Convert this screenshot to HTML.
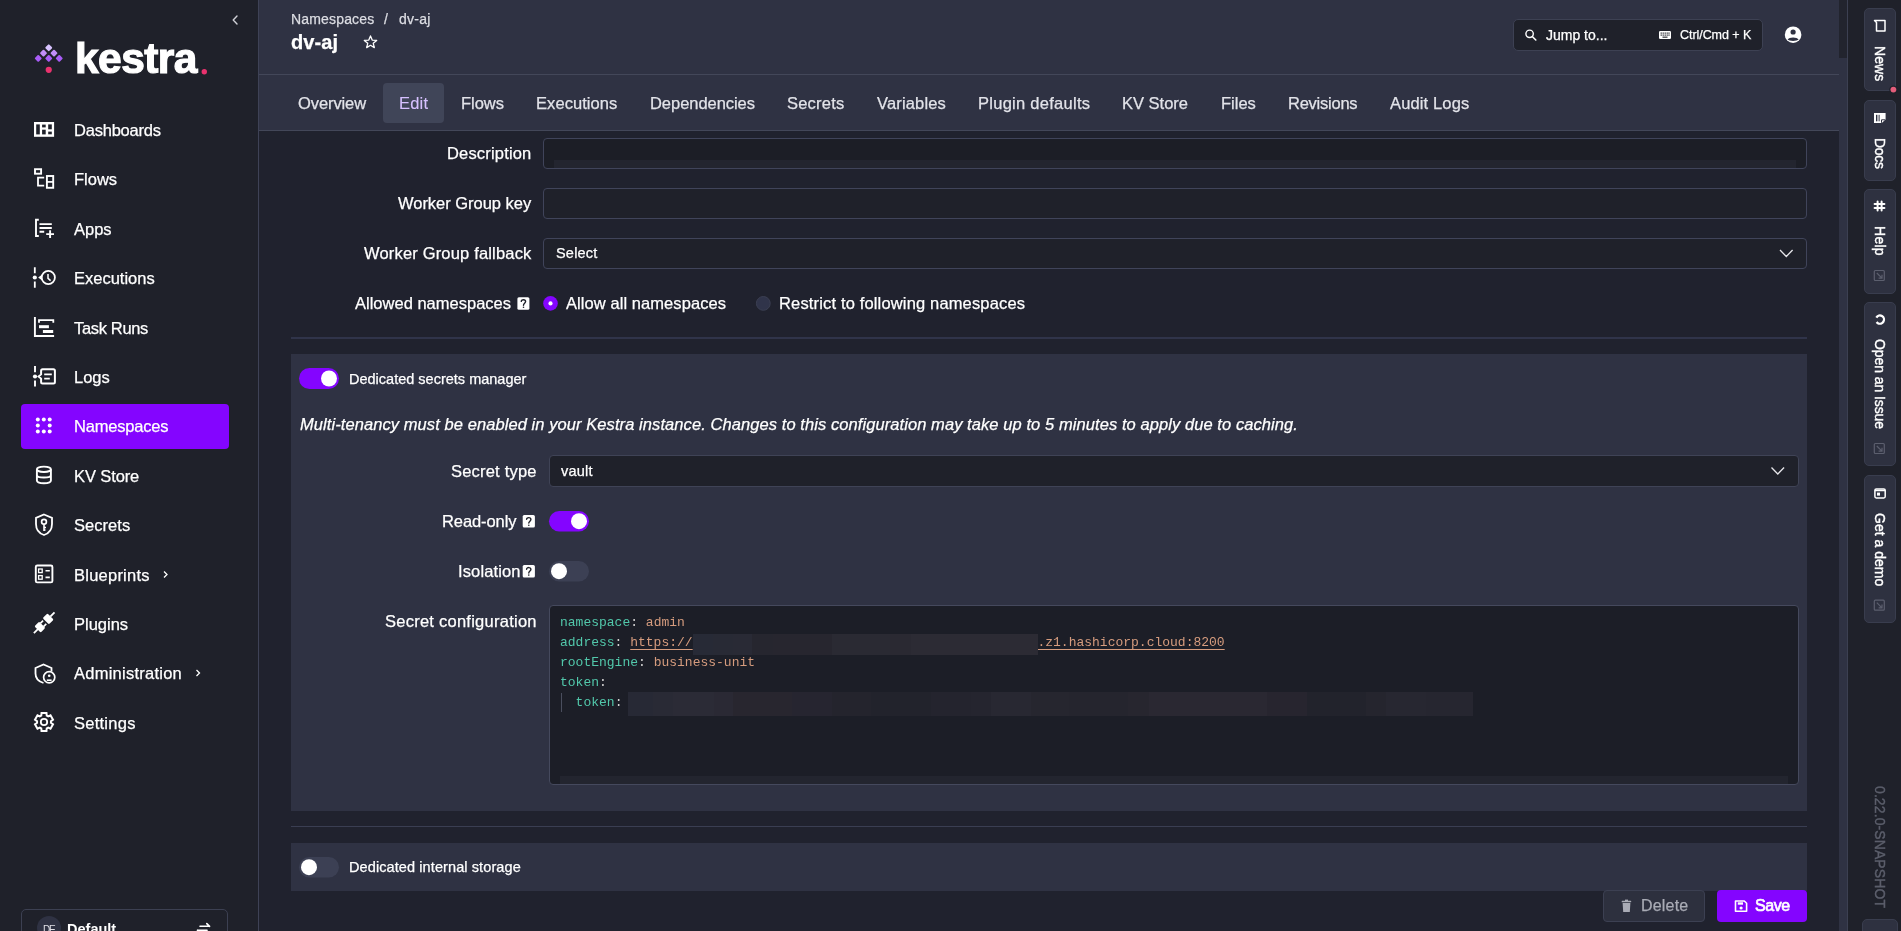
<!DOCTYPE html>
<html><head><meta charset="utf-8">
<style>
*{box-sizing:border-box;margin:0;padding:0}
html,body{width:1901px;height:931px;overflow:hidden;background:#20222e;font-family:"Liberation Sans",sans-serif;color:#fff}
.t{position:absolute;white-space:pre;font-family:"Liberation Sans",sans-serif;will-change:transform;-webkit-text-stroke:0.25px currentColor}
.r{position:absolute}
.code{will-change:transform;position:absolute;font-family:"Liberation Mono",monospace;font-size:13px;line-height:20px;white-space:pre;color:#d4d4d4}
.k{color:#52c8ab}.v{color:#d69c7e}
.u{text-decoration:underline;text-underline-offset:3px;text-decoration-thickness:1px}
</style></head><body>
<!-- sidebar -->
<div class="r" style="left:0;top:0;width:258px;height:931px;background:#1f212a"></div>
<div class="r" style="left:258px;top:0;width:1px;height:931px;background:#3e4256"></div>
<!-- header -->
<div class="r" style="left:259px;top:0;width:1580px;height:131px;background:#2f3243"></div>
<div class="r" style="left:259px;top:74px;width:1580px;height:1px;background:#434759"></div>
<div class="r" style="left:259px;top:130px;width:1580px;height:1px;background:#434759"></div>
<!-- scrollbar track -->
<div class="r" style="left:1839px;top:0;width:8px;height:931px;background:#2f3243"></div>
<div class="r" style="left:1839px;top:0;width:8px;height:58px;background:#22242e"></div>
<div class="r" style="left:1847px;top:0;width:1px;height:931px;background:#3c4052"></div>
<!-- right sidebar -->
<div class="r" style="left:1848px;top:0;width:53px;height:931px;background:#1f212a"></div>

<!-- active nav -->
<div class="r" style="left:21px;top:404px;width:208px;height:45px;background:#8405ff;border-radius:4px"></div>
<!-- edit tab -->
<div class="r" style="left:383px;top:83px;width:61px;height:40px;background:#404558;border-radius:4px"></div>

<!-- search -->
<div class="r" style="left:1513px;top:19px;width:250px;height:32px;background:#1f212a;border:1px solid #3d4153;border-radius:5px"></div>

<!-- form inputs -->
<div class="r" style="left:543px;top:138px;width:1264px;height:31px;background:#1c1e26;border:1px solid #40445a;border-radius:4px"></div>
<div class="r" style="left:554px;top:160px;width:1242px;height:8px;background:#23252f"></div>
<div class="r" style="left:543px;top:188px;width:1264px;height:31px;background:#1f212a;border:1px solid #40445a;border-radius:4px"></div>
<div class="r" style="left:543px;top:238px;width:1264px;height:31px;background:#1f212a;border:1px solid #40445a;border-radius:4px"></div>
<div class="r" style="left:291px;top:337px;width:1516px;height:2px;background:#30344a"></div>

<!-- panel 1 -->
<div class="r" style="left:291px;top:354px;width:1516px;height:457px;background:#2f3243"></div>
<div class="r" style="left:549px;top:455px;width:1250px;height:32px;background:#1f212a;border:1px solid #3f4356;border-radius:4px"></div>
<div class="r" style="left:549px;top:605px;width:1250px;height:180px;background:#1c1e27;border:1px solid #45495d;border-radius:4px"></div>
<div class="r" style="left:560px;top:775.5px;width:1228px;height:8px;background:#23252f"></div>
<div class="r" style="left:291px;top:826px;width:1516px;height:1px;background:#3a3e52"></div>
<!-- panel 2 -->
<div class="r" style="left:291px;top:843px;width:1516px;height:48px;background:#2f3243"></div>

<!-- buttons -->
<div class="r" style="left:1603px;top:890px;width:102px;height:32px;background:#2d303e;border:1px solid #3c4052;border-radius:4px"></div>
<div class="r" style="left:1717px;top:890px;width:90px;height:32px;background:#8405ff;border-radius:4px"></div>

<!-- tenant box -->
<div class="r" style="left:21px;top:909px;width:207px;height:40px;background:#1f212a;border:1px solid #3c4052;border-radius:5px"></div>
<div class="r" style="left:37px;top:916px;width:24px;height:24px;background:#2f3243;border-radius:50%"></div>

<svg class="r" style="left:0;top:0" width="1901" height="931" viewBox="0 0 1901 931">
<g fill="none" stroke="#fff" stroke-width="1.6" stroke-linecap="round" stroke-linejoin="round">
 <!-- collapse chevron -->
 <path d="M237,16 L233.2,20 L237,24" stroke="#cfd0d6" stroke-width="1.4"/>
</g>
<!-- logo -->
<g>
 <rect x="46.05" y="45.05" width="5.4" height="5.4" rx="1" transform="rotate(45 48.75 47.75)" fill="#d8c3ff"/>
 <rect x="40.80" y="50.40" width="5.4" height="5.4" rx="1" transform="rotate(45 43.5 53.1)" fill="#c28ef9"/>
 <rect x="51.30" y="50.40" width="5.4" height="5.4" rx="1" transform="rotate(45 54.0 53.1)" fill="#c28ef9"/>
 <rect x="35.55" y="55.70" width="5.4" height="5.4" rx="1" transform="rotate(45 38.25 58.4)" fill="#a85cf6"/>
 <rect x="46.05" y="55.70" width="5.4" height="5.4" rx="1" transform="rotate(45 48.75 58.4)" fill="#a85cf6"/>
 <rect x="56.55" y="55.70" width="5.4" height="5.4" rx="1" transform="rotate(45 59.25 58.4)" fill="#a85cf6"/>
 <circle cx="48.75" cy="69.8" r="3.1" fill="#e9326e"/>
 <circle cx="204.3" cy="71.8" r="2.7" fill="#e9326e"/>
</g>
<g fill="none" stroke="#fff" stroke-width="1.9">
 <!-- dashboards -->
 <rect x="34" y="122" width="20.1" height="14.8" fill="#fff" stroke="none"/>
 <g fill="#1f212a" stroke="none">
  <rect x="36.2" y="124.4" width="3.6" height="10"/>
  <rect x="42.1" y="124.6" width="3.6" height="2.8"/>
  <rect x="42.1" y="129.7" width="3.6" height="4.7"/>
  <rect x="48.2" y="124.4" width="3.6" height="4.9"/>
  <rect x="48.2" y="131.6" width="3.6" height="2.7"/>
 </g>
 <!-- flows -->
 <rect x="35" y="169.2" width="6.1" height="4.5" stroke-width="1.9"/>
 <path d="M44.2,177.7 H38 V185.7 H44.2" stroke-width="1.8"/>
 <rect x="46.9" y="176" width="6.3" height="11.8" stroke-width="1.9"/>
 <path d="M46.9,181.9 H53.2" stroke-width="1.7"/>
 <!-- apps -->
 <path d="M38.8,219.8 H36 V236 H38.8" stroke-width="1.9"/>
 <path d="M39.5,224.1 H51.8 M39.5,228 H51.8 M39.5,231.8 H44.2 M50.1,230.2 V238 M46.2,234.1 H54" stroke-width="1.9"/>
 <!-- executions -->
 <path d="M34.8,267.3 V273.3 M34.8,281.5 V287.7" stroke-width="1.8"/>
 <circle cx="48.3" cy="277.5" r="6.6" stroke-width="1.8"/>
 <path d="M48,274 V278.3 L50.6,280.6" stroke-width="1.5"/>
 <path d="M38.2,277.5 L41.9,274.8 V280.2 Z" fill="#fff" stroke="none"/>
 <!-- task runs -->
 <path d="M34.9,317 V336 H54.1" stroke-width="1.9"/>
 <path d="M39,322.8 V320.1 H53.3 V322.8" stroke-width="1.8"/>
 <rect x="39" y="325.2" width="9.9" height="3" fill="#fff" stroke="none"/>
 <rect x="42.9" y="330" width="10.3" height="3" fill="#fff" stroke="none"/>
 <!-- logs -->
 <path d="M35,366 V372.3 M35,380.4 V386.6" stroke-width="1.9"/>
 <path d="M42.6,369.2 H53.4 Q54.9,369.2 54.9,370.7 V382.1 Q54.9,383.6 53.4,383.6 H42.6 Q41.1,383.6 41.1,382.1 V378.6 L38.6,376.5 L41.1,374.4 V370.7 Q41.1,369.2 42.6,369.2 Z" stroke-width="2"/>
 <path d="M44.2,374.4 H51.8 M44.2,378.6 H49.8" stroke-width="1.8"/>
 <!-- kv store -->
 <ellipse cx="43.9" cy="469.3" rx="7" ry="2.7"/>
 <path d="M36.9,469.3 V480.6 C36.9,484.2 50.9,484.2 50.9,480.6 V469.3 M36.9,475 C36.9,478.4 50.9,478.4 50.9,475"/>
 <!-- secrets -->
 <path d="M44,514.5 L52,517.8 V524 C52,529.5 48.5,533.5 44,535 C39.5,533.5 36,529.5 36,524 V517.8 Z" stroke-width="1.8"/>
 <circle cx="44" cy="521.8" r="2.4" stroke-width="1.7"/>
 <path d="M44,524.2 V531 M44,527.5 H46 M44,530 H45.5" stroke-width="1.6"/>
 <!-- blueprints -->
 <rect x="35.8" y="565.5" width="16.6" height="16.9" rx="1.5"/>
 <rect x="38.6" y="569" width="3.6" height="3.6" stroke-width="1.3"/>
 <rect x="38.6" y="575.6" width="3.6" height="3.6" stroke-width="1.3"/>
 <path d="M45.5,570.8 H49.8 M45.5,577.4 H49.8" stroke-width="1.6"/>
 <!-- plugins -->
 <g transform="rotate(-45 44.2 622.8) translate(44.2 622.8)" stroke="none" fill="#fff">
  <rect x="-14.6" y="-0.9" width="6" height="1.8"/>
  <rect x="-9.4" y="-4.4" width="6.6" height="8.8" rx="1.2"/>
  <rect x="-3.2" y="-3.1" width="3.9" height="1.7"/>
  <rect x="-3.2" y="1.4" width="3.9" height="1.7"/>
  <rect x="2.2" y="-4.4" width="6.8" height="8.8" rx="1.2"/>
  <rect x="8.6" y="-0.9" width="6" height="1.8"/>
 </g>
 <!-- administration -->
 <path d="M51.5,671.5 V668 L43.5,664.5 L35.5,668 V673.5 C35.5,678 38.5,681.5 43.5,683" stroke-width="1.8"/>
 <circle cx="49.2" cy="677.3" r="5.6" stroke-width="1.7"/>
 <circle cx="49.2" cy="675.8" r="1.3" fill="#fff" stroke="none"/>
 <path d="M46.8,680.2 H51.6" stroke-width="1.6"/>
 <!-- settings -->
 <path stroke-width="2" d="M41.27,715.55 L41.52,713.04 L46.48,713.04 L46.73,715.55 L48.22,716.42 L50.52,715.37 L53.00,719.67 L50.95,721.14 L50.95,722.86 L53.00,724.33 L50.52,728.63 L48.22,727.58 L46.73,728.45 L46.48,730.96 L41.52,730.96 L41.27,728.45 L39.78,727.58 L37.48,728.63 L35.00,724.33 L37.05,722.86 L37.05,721.14 L35.00,719.67 L37.48,715.37 L39.78,716.42Z" stroke-width="1.8"/>
 <circle cx="44" cy="722" r="3.2" stroke-width="1.8"/>
</g>
<!-- namespaces dots -->
<g fill="#fff">
 <circle cx="37.8" cy="419.5" r="2"/><circle cx="43.8" cy="419.5" r="2"/><circle cx="49.7" cy="419.5" r="2"/>
 <circle cx="37.8" cy="425.4" r="2"/><circle cx="49.7" cy="425.4" r="2"/>
 <circle cx="37.8" cy="431.4" r="2"/><circle cx="43.8" cy="431.4" r="2"/><circle cx="49.7" cy="431.4" r="2"/>
 <circle cx="44" cy="376.8" r="0" />
 <circle cx="34.8" cy="277.5" r="2.1"/>
 <circle cx="35" cy="376.5" r="2.1"/>
</g>
<!-- blueprints / admin chevrons -->
<g fill="none" stroke="#fff" stroke-width="1.3">
 <path d="M164,571.5 L167,574.5 L164,577.5"/>
 <path d="M196.5,670 L199.5,673 L196.5,676"/>
</g>
<!-- star -->
<polygon points="370.50,35.90 372.20,40.05 376.68,40.39 373.26,43.30 374.32,47.66 370.50,45.30 366.68,47.66 367.74,43.30 364.32,40.39 368.80,40.05" fill="none" stroke="#fff" stroke-width="1.3" stroke-linejoin="round"/>
<!-- search -->
<circle cx="1529.6" cy="33.8" r="3.7" fill="none" stroke="#fff" stroke-width="1.4"/>
<path d="M1532.3,36.5 L1535.8,40" stroke="#fff" stroke-width="1.6" stroke-linecap="round"/>
<!-- keyboard -->
<rect x="1659" y="31" width="12" height="8" rx="1.2" fill="#fff"/>
<g fill="#1f212a">
 <rect x="1660.6" y="32.5" width="1.2" height="1.2"/><rect x="1662.6" y="32.5" width="1.2" height="1.2"/><rect x="1664.6" y="32.5" width="1.2" height="1.2"/><rect x="1666.6" y="32.5" width="1.2" height="1.2"/><rect x="1668.4" y="32.5" width="1.2" height="1.2"/>
 <rect x="1660.6" y="34.5" width="1.2" height="1.2"/><rect x="1662.6" y="34.5" width="1.2" height="1.2"/><rect x="1664.6" y="34.5" width="1.2" height="1.2"/><rect x="1666.6" y="34.5" width="1.2" height="1.2"/><rect x="1668.4" y="34.5" width="1.2" height="1.2"/>
 <rect x="1662.5" y="36.6" width="5" height="1.1"/>
</g>
<!-- user -->
<circle cx="1793.1" cy="34.7" r="8.3" fill="#fff"/>
<circle cx="1793.1" cy="32" r="2.6" fill="#2f3243"/>
<path d="M1787.6,39.6 C1789,36.8 1797.2,36.8 1798.6,39.6 C1797.2,41.3 1789,41.3 1787.6,39.6Z" fill="#2f3243"/>
<!-- select chevrons -->
<path d="M1780,250 L1786.3,256.5 L1792.6,250" fill="none" stroke="#e6e6ea" stroke-width="1.3"/>
<path d="M1771.5,467.5 L1777.8,474 L1784.1,467.5" fill="none" stroke="#e6e6ea" stroke-width="1.3"/>
<!-- help ? boxes -->
<g>
 <rect x="517.4" y="297.2" width="12" height="12.6" rx="1.5" fill="#fff"/>
 <rect x="522.7" y="515.1" width="12.2" height="12.4" rx="1.5" fill="#fff"/>
 <rect x="522.7" y="565" width="12.2" height="12.4" rx="1.5" fill="#fff"/>
</g>
<g fill="none" stroke="#1f212a" stroke-width="1.4" stroke-linecap="round">
 <path d="M521.3,301.4 C521.3,299.2 525.6,299.2 525.6,301.6 C525.6,303.2 523.5,303.4 523.5,305.2"/>
 <path d="M526.6,519.3 C526.6,517.1 530.9,517.1 530.9,519.5 C530.9,521.1 528.8,521.3 528.8,523.1"/>
 <path d="M526.6,569.2 C526.6,567 530.9,567 530.9,569.4 C530.9,571 528.8,571.2 528.8,573"/>
</g>
<g fill="#1f212a"><circle cx="523.5" cy="307.3" r="0.8"/><circle cx="528.8" cy="525.2" r="0.8"/><circle cx="528.8" cy="575.1" r="0.8"/></g>
<!-- radios -->
<circle cx="550.5" cy="303.4" r="7.3" fill="#8405ff"/>
<circle cx="550.5" cy="303.4" r="2.1" fill="#fff"/>
<circle cx="763.3" cy="303.4" r="6.9" fill="#30344a" stroke="#3b3f52" stroke-width="1"/>
<!-- toggles -->
<rect x="299" y="368" width="40" height="21" rx="10.5" fill="#8405ff"/>
<circle cx="329" cy="378.5" r="8" fill="#fff"/>
<rect x="549" y="511" width="40" height="20.5" rx="10.25" fill="#8405ff"/>
<circle cx="579" cy="521.2" r="8" fill="#fff"/>
<rect x="549" y="561" width="40" height="20.5" rx="10.25" fill="#3c4054"/>
<circle cx="559" cy="571.2" r="8" fill="#fff"/>
<rect x="299" y="857" width="40" height="20.5" rx="10.25" fill="#3c4054"/>
<circle cx="309" cy="867.2" r="8" fill="#fff"/>
<!-- trash -->
<g fill="#a9abb5">
 <path d="M1622.6,903 H1630.4 L1629.8,912 H1623.2 Z"/>
 <rect x="1621.7" y="900.8" width="9.5" height="1.5" rx="0.4"/>
 <rect x="1625" y="899.6" width="3" height="1.4"/>
</g>
<!-- save icon -->
<path d="M1735.5,901 H1744.3 L1746.6,903.3 V911.3 H1735.5 Z" fill="none" stroke="#fff" stroke-width="1.6" stroke-linejoin="round"/>
<rect x="1737.8" y="902.3" width="5.2" height="2.4" fill="#fff"/>
<circle cx="1741.1" cy="908" r="1.6" fill="#fff"/>
<!-- tenant swap -->
<path d="M200,926.3 H209.5 M206.8,923.6 L209.6,926.3 M207,930.3 H197.6 M200.3,933 L197.5,930.3" fill="none" stroke="#fff" stroke-width="1.6" stroke-linecap="round"/>
</svg>
<!-- code editor content -->
<div class="code" style="left:560.4px;top:613px"><span class="k">namespace</span>: <span class="v">admin</span>
<span class="k">address</span>: <span class="v u">https://<span style="display:inline-block;width:344.8px"></span>.z1.hashicorp.cloud:8200</span>
<span class="k">rootEngine</span>: <span class="v">business-unit</span>
<span class="k">token</span>:
  <span class="k">token</span>: </div>
<div class="r" style="left:560.5px;top:692.5px;width:1px;height:19px;background:#4a4e5e"></div>
<div class="r" style="left:692.6px;top:633.8px;width:345px;height:20.8px;background:linear-gradient(90deg,#272a36 0.00%,#272a36 5.91%,#282a35 5.91%,#282a35 11.57%,#292a35 11.57%,#292a35 17.22%,#26262f 17.22%,#26262f 23.13%,#27262f 23.13%,#27262f 40.35%,#2a2a33 40.35%,#2a2a33 57.22%,#2a2932 57.22%,#2a2932 63.16%,#2c2b34 63.16%,#2c2b34 100.00%)"></div>
<div class="r" style="left:628.3px;top:691.8px;width:844.8px;height:23.8px;background:linear-gradient(90deg,#272935 0.00%,#272935 2.92%,#292a35 2.92%,#292a35 5.29%,#2b2b36 5.29%,#2b2b36 10.14%,#2a2934 10.14%,#2a2934 12.39%,#28262f 12.39%,#28262f 19.38%,#262530 19.38%,#262530 24.11%,#24242d 24.11%,#24242d 28.73%,#22232c 28.73%,#22232c 35.83%,#24242e 35.83%,#24242e 40.57%,#25252f 40.57%,#25252f 42.93%,#282832 42.93%,#282832 47.67%,#26262f 47.67%,#26262f 52.17%,#25252e 52.17%,#25252e 59.21%,#27262f 59.21%,#27262f 61.64%,#2a2832 61.64%,#2a2832 75.60%,#27252f 75.60%,#27252f 80.34%,#22232c 80.34%,#22232c 87.38%,#25252e 87.38%,#25252e 89.69%,#272731 89.69%,#272731 94.42%,#262630 94.42%,#262630 100.00%)"></div>
<div class="r" style="left:1037.6px;top:654.2px;width:0;height:0"></div>

<!-- right sidebar buttons -->
<div class="r" style="left:1864px;top:8px;width:31.5px;height:83px;background:#2e3140;border:1px solid #393d4e;border-radius:5px"></div>
<div class="r" style="left:1864px;top:100.3px;width:31.5px;height:80.3px;background:#2e3140;border:1px solid #393d4e;border-radius:5px"></div>
<div class="r" style="left:1864px;top:188.5px;width:31.5px;height:105px;background:#2e3140;border:1px solid #393d4e;border-radius:5px"></div>
<div class="r" style="left:1864px;top:301.8px;width:31.5px;height:164.3px;background:#2e3140;border:1px solid #393d4e;border-radius:5px"></div>
<div class="r" style="left:1864px;top:475px;width:31.5px;height:147.5px;background:#2e3140;border:1px solid #393d4e;border-radius:5px"></div>
<div class="r" style="left:1862px;top:919px;width:35.5px;height:30px;background:#2e3140;border:1px solid #393d4e;border-radius:5px"></div>
<svg class="r" style="left:0;top:0" width="1901" height="931" viewBox="0 0 1901 931">
 <!-- news dot -->
 <circle cx="1893.4" cy="89.6" r="4.2" fill="#1f212a"/>
 <circle cx="1893.4" cy="89.6" r="2.9" fill="#e35d7a"/>
 <!-- news icon -->
 <path d="M1874.5,20.5 H1885 V31 H1876.5 V22.5 Z" fill="none" stroke="#fff" stroke-width="1.5" stroke-linejoin="round"/>
 <!-- docs icon -->
 <path d="M1874,113 H1885.6 V119.5 L1881.8,123 H1874 Z" fill="#fff"/>
 <rect x="1876" y="114.8" width="1.4" height="6.5" fill="#2e3140"/>
 <rect x="1878.6" y="114.8" width="1" height="6.5" fill="#2e3140"/>
 <path d="M1881.5,122.8 V119.8 H1885.3" fill="none" stroke="#2e3140" stroke-width="1"/>
 <!-- slack icon -->
 <g stroke="#fff" stroke-width="2" stroke-linecap="round">
  <path d="M1877.6,201.6 V210.4 M1881.6,201.6 V210.4 M1874.6,204 H1884.4 M1874.6,208 H1884.4"/>
 </g>
 <!-- github / issue icon -->
 <circle cx="1879.9" cy="319.6" r="4.1" fill="none" stroke="#fff" stroke-width="2.3" stroke-dasharray="20.5 5.3" transform="rotate(-150 1879.9 319.6)"/>
 <!-- demo icon -->
 <rect x="1874.9" y="488.9" width="10.3" height="9" rx="1.4" fill="none" stroke="#fff" stroke-width="1.5"/>
 <rect x="1877" y="492.6" width="3" height="3" fill="#fff"/>
 <path d="M1874.9,490.5 H1885.2" stroke="#fff" stroke-width="1.5"/>
 <!-- external link icons -->
 <g fill="none" stroke="#5c5f6e" stroke-width="1.2">
  <rect x="1874.3" y="270.5" width="10" height="10" rx="1"/><path d="M1876.8,273 L1882,278.2 M1882,274.8 V278.2 H1878.6"/>
  <rect x="1874.3" y="443.5" width="10" height="10" rx="1"/><path d="M1876.8,446 L1882,451.2 M1882,447.8 V451.2 H1878.6"/>
  <rect x="1874.3" y="600.2" width="10" height="10" rx="1"/><path d="M1876.8,602.7 L1882,607.9 M1882,604.5 V607.9 H1878.6"/>
 </g>
</svg>

<div class="t" style="left:74.00px;top:122.03px;font-size:16.5px;line-height:16.5px;letter-spacing:-0.220px;color:#fff;">Dashboards</div>
<div class="t" style="left:74.00px;top:171.43px;font-size:16.5px;line-height:16.5px;letter-spacing:0.000px;color:#fff;">Flows</div>
<div class="t" style="left:74.00px;top:220.83px;font-size:16.5px;line-height:16.5px;letter-spacing:0.000px;color:#fff;">Apps</div>
<div class="t" style="left:74.00px;top:270.23px;font-size:16.5px;line-height:16.5px;letter-spacing:-0.002px;color:#fff;">Executions</div>
<div class="t" style="left:74.00px;top:319.63px;font-size:16.5px;line-height:16.5px;letter-spacing:-0.341px;color:#fff;">Task Runs</div>
<div class="t" style="left:74.00px;top:369.03px;font-size:16.5px;line-height:16.5px;letter-spacing:0.000px;color:#fff;">Logs</div>
<div class="t" style="left:74.00px;top:418.43px;font-size:16.5px;line-height:16.5px;letter-spacing:-0.189px;color:#fff;">Namespaces</div>
<div class="t" style="left:74.00px;top:467.83px;font-size:16.5px;line-height:16.5px;letter-spacing:-0.107px;color:#fff;">KV Store</div>
<div class="t" style="left:74.00px;top:517.23px;font-size:16.5px;line-height:16.5px;letter-spacing:0.044px;color:#fff;">Secrets</div>
<div class="t" style="left:74.00px;top:566.63px;font-size:16.5px;line-height:16.5px;letter-spacing:0.236px;color:#fff;">Blueprints</div>
<div class="t" style="left:74.00px;top:616.03px;font-size:16.5px;line-height:16.5px;letter-spacing:-0.004px;color:#fff;">Plugins</div>
<div class="t" style="left:74.00px;top:665.43px;font-size:16.5px;line-height:16.5px;letter-spacing:0.250px;color:#fff;">Administration</div>
<div class="t" style="left:74.00px;top:714.83px;font-size:16.5px;line-height:16.5px;letter-spacing:0.254px;color:#fff;">Settings</div>
<div class="t" style="left:74.50px;top:37.82px;font-size:42.5px;line-height:42.5px;letter-spacing:-0.550px;color:#fff;font-weight:700;-webkit-text-stroke:1.2px #fff;">kestra</div>
<div class="t" style="left:291.30px;top:12.35px;font-size:14px;line-height:14px;letter-spacing:0.166px;color:#dcdde3;">Namespaces</div>
<div class="t" style="left:384.20px;top:12.35px;font-size:14px;line-height:14px;letter-spacing:0.000px;color:#dcdde3;">/</div>
<div class="t" style="left:398.70px;top:12.35px;font-size:14px;line-height:14px;letter-spacing:0.235px;color:#dcdde3;">dv-aj</div>
<div class="t" style="left:291.00px;top:31.77px;font-size:20px;line-height:20px;letter-spacing:0.078px;color:#fff;font-weight:700;">dv-aj</div>
<div class="t" style="left:298.20px;top:95.03px;font-size:16.5px;line-height:16.5px;letter-spacing:-0.095px;color:#e2e3e9;">Overview</div>
<div class="t" style="left:399.00px;top:95.03px;font-size:16.5px;line-height:16.5px;letter-spacing:0.188px;color:#d6c0ff;-webkit-text-stroke:0.1px currentColor;">Edit</div>
<div class="t" style="left:460.50px;top:95.03px;font-size:16.5px;line-height:16.5px;letter-spacing:-0.048px;color:#e2e3e9;">Flows</div>
<div class="t" style="left:536.30px;top:95.03px;font-size:16.5px;line-height:16.5px;letter-spacing:0.065px;color:#e2e3e9;">Executions</div>
<div class="t" style="left:650.00px;top:95.03px;font-size:16.5px;line-height:16.5px;letter-spacing:-0.045px;color:#e2e3e9;">Dependencies</div>
<div class="t" style="left:787.20px;top:95.03px;font-size:16.5px;line-height:16.5px;letter-spacing:0.210px;color:#e2e3e9;">Secrets</div>
<div class="t" style="left:876.80px;top:95.03px;font-size:16.5px;line-height:16.5px;letter-spacing:0.153px;color:#e2e3e9;">Variables</div>
<div class="t" style="left:978.00px;top:95.03px;font-size:16.5px;line-height:16.5px;letter-spacing:0.268px;color:#e2e3e9;">Plugin defaults</div>
<div class="t" style="left:1122.40px;top:95.03px;font-size:16.5px;line-height:16.5px;letter-spacing:-0.007px;color:#e2e3e9;">KV Store</div>
<div class="t" style="left:1220.80px;top:95.03px;font-size:16.5px;line-height:16.5px;letter-spacing:-0.011px;color:#e2e3e9;">Files</div>
<div class="t" style="left:1288.00px;top:95.03px;font-size:16.5px;line-height:16.5px;letter-spacing:-0.241px;color:#e2e3e9;">Revisions</div>
<div class="t" style="left:1390.00px;top:95.03px;font-size:16.5px;line-height:16.5px;letter-spacing:0.135px;color:#e2e3e9;">Audit Logs</div>
<div class="t" style="left:1546.00px;top:28.45px;font-size:14px;line-height:14px;letter-spacing:-0.008px;color:#fff;">Jump to...</div>
<div class="t" style="left:1680.00px;top:29.32px;font-size:12.5px;line-height:12.5px;letter-spacing:-0.054px;color:#fff;">Ctrl/Cmd + K</div>
<div class="t" style="left:447.20px;top:145.23px;font-size:16.5px;line-height:16.5px;letter-spacing:0.175px;color:#fff;">Description</div>
<div class="t" style="left:398.30px;top:195.23px;font-size:16.5px;line-height:16.5px;letter-spacing:-0.025px;color:#fff;">Worker Group key</div>
<div class="t" style="left:364.20px;top:245.23px;font-size:16.5px;line-height:16.5px;letter-spacing:0.173px;color:#fff;">Worker Group fallback</div>
<div class="t" style="left:355.30px;top:294.83px;font-size:16.5px;line-height:16.5px;letter-spacing:0.005px;color:#fff;">Allowed namespaces</div>
<div class="t" style="left:555.80px;top:246.33px;font-size:14.5px;line-height:14.5px;letter-spacing:0.197px;color:#fff;">Select</div>
<div class="t" style="left:566.20px;top:294.83px;font-size:16.5px;line-height:16.5px;letter-spacing:0.070px;color:#fff;">Allow all namespaces</div>
<div class="t" style="left:779.30px;top:294.83px;font-size:16.5px;line-height:16.5px;letter-spacing:0.155px;color:#fff;">Restrict to following namespaces</div>
<div class="t" style="left:349.30px;top:371.93px;font-size:14.5px;line-height:14.5px;letter-spacing:0.003px;color:#fff;">Dedicated secrets manager</div>
<div class="t" style="left:300.00px;top:415.83px;font-size:16.5px;line-height:16.5px;letter-spacing:0.076px;color:#fff;font-style:italic;">Multi-tenancy must be enabled in your Kestra instance. Changes to this configuration may take up to 5 minutes to apply due to caching.</div>
<div class="t" style="left:451.00px;top:462.73px;font-size:16.5px;line-height:16.5px;letter-spacing:0.203px;color:#fff;">Secret type</div>
<div class="t" style="left:560.80px;top:463.73px;font-size:14.5px;line-height:14.5px;letter-spacing:0.240px;color:#fff;">vault</div>
<div class="t" style="left:442.10px;top:513.23px;font-size:16.5px;line-height:16.5px;letter-spacing:-0.090px;color:#fff;">Read-only</div>
<div class="t" style="left:457.90px;top:563.43px;font-size:16.5px;line-height:16.5px;letter-spacing:0.129px;color:#fff;">Isolation</div>
<div class="t" style="left:385.30px;top:613.23px;font-size:16.5px;line-height:16.5px;letter-spacing:0.249px;color:#fff;">Secret configuration</div>
<div class="t" style="left:349.30px;top:860.33px;font-size:14.5px;line-height:14.5px;letter-spacing:0.097px;color:#fff;">Dedicated internal storage</div>
<div class="t" style="left:1641.00px;top:898.26px;font-size:16px;line-height:16px;letter-spacing:0.190px;color:#a9abb5;">Delete</div>
<div class="t" style="left:1755.30px;top:898.26px;font-size:16px;line-height:16px;letter-spacing:-0.423px;color:#fff;-webkit-text-stroke:0.65px #fff;">Save</div>
<div class="t" style="left:67.40px;top:921.73px;font-size:14.5px;line-height:14.5px;letter-spacing:0.007px;color:#fff;font-weight:700;-webkit-text-stroke:0;">Default</div>
<div class="t" style="left:42.60px;top:925.13px;font-size:10px;line-height:10px;letter-spacing:-1.306px;color:#e0e0e6;-webkit-text-stroke:0;">DE</div>
<div class="t" style="left:1887.42px;top:45.60px;font-size:14px;line-height:14px;letter-spacing:0.095px;color:#fff;transform:rotate(90deg);transform-origin:0 0;-webkit-text-stroke:0.35px currentColor;">News</div>
<div class="t" style="left:1887.42px;top:138.00px;font-size:14px;line-height:14px;letter-spacing:-0.302px;color:#fff;transform:rotate(90deg);transform-origin:0 0;-webkit-text-stroke:0.35px currentColor;">Docs</div>
<div class="t" style="left:1887.42px;top:226.40px;font-size:14px;line-height:14px;letter-spacing:0.268px;color:#fff;transform:rotate(90deg);transform-origin:0 0;-webkit-text-stroke:0.35px currentColor;">Help</div>
<div class="t" style="left:1887.42px;top:339.20px;font-size:14px;line-height:14px;letter-spacing:-0.080px;color:#fff;transform:rotate(90deg);transform-origin:0 0;-webkit-text-stroke:0.35px currentColor;">Open an Issue</div>
<div class="t" style="left:1887.42px;top:512.50px;font-size:14px;line-height:14px;letter-spacing:0.016px;color:#fff;transform:rotate(90deg);transform-origin:0 0;-webkit-text-stroke:0.35px currentColor;">Get a demo</div>
<div class="t" style="left:1887.02px;top:785.50px;font-size:14px;line-height:14px;letter-spacing:0.099px;color:#5b5e6b;transform:rotate(90deg);transform-origin:0 0;-webkit-text-stroke:0.35px currentColor;">0.22.0-SNAPSHOT</div>
</body></html>
